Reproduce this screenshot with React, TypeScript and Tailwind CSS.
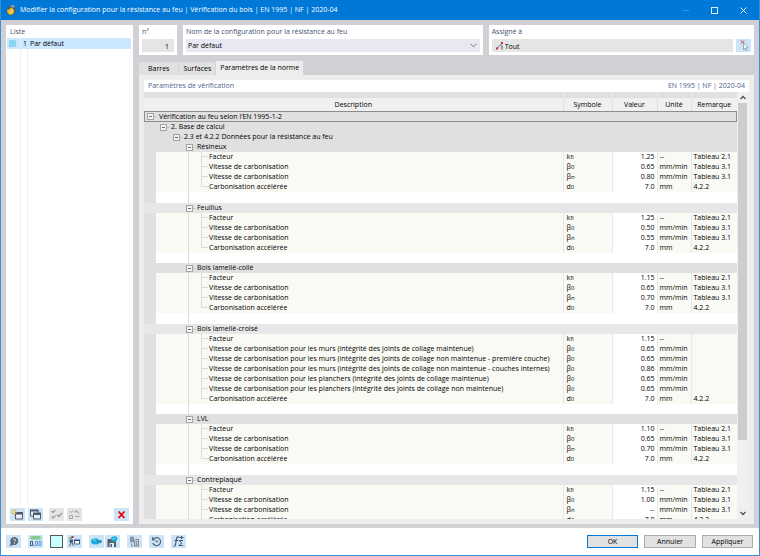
import { useState } from 'react'
import type { ReactNode } from 'react'
import { clsx } from 'clsx'

type Leaf = {
  label: string
  symbol: string
  sub: string
  value: string
  unit: string
  note: string
}

type Group = { title: string; leaves: Leaf[] }

const SPEED = 'Vitesse de carbonisation'
const MM = 'mm/min'

const leaf = (label: string, symbol: string, sub: string, value: string, unit: string, note: string): Leaf => ({
  label,
  symbol,
  sub,
  value,
  unit,
  note,
})

const standardLeaves = (factor: string, b0: string, bn: string): Leaf[] => [
  leaf('Facteur', 'k', 'fi', factor, '--', 'Tableau 2.1'),
  leaf(SPEED, 'β', '0', b0, MM, 'Tableau 3.1'),
  leaf(SPEED, 'β', 'n', bn, MM, 'Tableau 3.1'),
  leaf('Carbonisation accélérée', 'd', '0', '7.0', 'mm', '4.2.2'),
]

const GROUPS: Group[] = [
  { title: 'Résineux', leaves: standardLeaves('1.25', '0.65', '0.80') },
  { title: 'Feuillus', leaves: standardLeaves('1.25', '0.50', '0.55') },
  { title: 'Bois lamellé-collé', leaves: standardLeaves('1.15', '0.65', '0.70') },
  {
    title: 'Bois lamellé-croisé',
    leaves: [
      leaf('Facteur', 'k', 'fi', '1.15', '--', ''),
      leaf(`${SPEED} pour les murs (intégrité des joints de collage maintenue)`, 'β', '0', '0.65', MM, ''),
      leaf(`${SPEED} pour les murs (intégrité des joints de collage non maintenue - première couche)`, 'β', '0', '0.65', MM, ''),
      leaf(`${SPEED} pour les murs (intégrité des joints de collage non maintenue - couches internes)`, 'β', '0', '0.86', MM, ''),
      leaf(`${SPEED} pour les planchers (intégrité des joints de collage maintenue)`, 'β', '0', '0.65', MM, ''),
      leaf(`${SPEED} pour les planchers (intégrité des joints de collage non maintenue)`, 'β', '0', '0.65', MM, ''),
      leaf('Carbonisation accélérée', 'd', '0', '7.0', 'mm', '4.2.2'),
    ],
  },
  { title: 'LVL', leaves: standardLeaves('1.10', '0.65', '0.70') },
  { title: 'Contreplaqué', leaves: standardLeaves('1.15', '1.00', '--') },
]

const TABS = ['Barres', 'Surfaces', 'Paramètres de la norme']

function Toggle({ open, label, onClick }: { open: boolean; label: string; onClick?: () => void }) {
  return (
    <span className="flex w-[13px] shrink-0 items-center">
      <span className="w-[3px]" />
      <button
        type="button"
        aria-label={label}
        aria-expanded={open}
        onClick={onClick}
        className="flex size-[7px] items-center justify-center border border-[#a3a3a3] bg-[#f4f4f4]"
      >
        <svg viewBox="0 0 5 5" className="size-[5px]" shapeRendering="crispEdges">
          <path d="M1 2h3v1H1z" fill="#6c6c6c" />
          {!open && <path d="M2 1h1v3H2z" fill="#6c6c6c" />}
        </svg>
      </button>
      <span className="h-px w-[3px] bg-[#c8c8c8]" />
    </span>
  )
}

function Guide({ last, branch }: { last?: boolean; branch?: boolean }) {
  return (
    <span className="flex h-[10px] w-[13px] shrink-0">
      <span className={clsx('w-[6px] border-r border-[#dcdcdc]', last ? 'h-[5px]' : 'h-full')} />
      {branch && <span className="h-[5px] w-[6px] border-b border-[#dcdcdc]" />}
    </span>
  )
}

function IconButton({ label, muted, children }: { label: string; muted?: boolean; children: ReactNode }) {
  return (
    <button
      type="button"
      aria-label={label}
      className={clsx('flex h-[13px] w-[15px] shrink-0 items-center justify-center', muted ? 'bg-[#e5e5e5]' : 'bg-[#cce4f7]')}
    >
      <svg viewBox="0 0 15 13" className="h-[13px] w-[15px]" fill="none">
        {children}
      </svg>
    </button>
  )
}

function TitleBar() {
  return (
    <header className="flex h-5 shrink-0 items-center bg-[#0078d7] pr-px pl-[5px] text-white">
      <svg viewBox="0 0 10 10" className="size-[10px]">
        <path d="M1 3l2 1 .500-3 2-1 3 1.500 1 3.500-1 4-4 1-3-1-1-3z" fill="#55585e" />
        <path d="M1 4.500l2.500 0 1-2 2.500 1 1.200 2.500-1.200 3.200-3.500.6-2-2z" fill="#f5b81f" />
        <path d="M4.500 1l3.500 1.200M6 .5l2.500 1" stroke="#d8d8d8" strokeWidth=".7" />
        <circle cx="5" cy="6.500" r="1.200" fill="#fff2a0" />
        <circle cx="5" cy="6.500" r=".5" fill="#55585e" />
      </svg>
      <h1 className="ml-1 flex-1 text-[7px] leading-[20px] whitespace-nowrap">
        Modifier la configuration pour la résistance au feu | Vérification du bois | EN 1995 | NF | 2020-04
      </h1>
      <button type="button" aria-label="Réduire" className="flex w-[29px] justify-center">
        <span className="h-px w-[6px] bg-[#3d97e0]" />
      </button>
      <button type="button" aria-label="Agrandir" className="flex w-[29px] justify-center">
        <span className="size-[7px] border border-[#d9ebfa]" />
      </button>
      <button type="button" aria-label="Fermer" className="flex w-[29px] justify-center">
        <svg viewBox="0 0 7 7" className="size-[7px]" stroke="#e9f3fc">
          <path d="M.5.5l6 6M6.500.5l-6 6" />
        </svg>
      </button>
    </header>
  )
}

function ConfigList() {
  return (
    <aside className="flex w-[127px] shrink-0 flex-col bg-white px-px text-[7px]">
      <h2 className="h-[13px] pl-[3px] leading-[13px] text-[#44546f]">Liste</h2>
      <button type="button" className="flex h-[11px] w-[124px] items-center bg-[#cce8ff] text-left">
        <span className="ml-[2px] size-[7px] bg-[#8bd7f3]" />
        <span className="ml-[4px] h-full w-px bg-[#e2f1fc]" />
        <span className="ml-[2px] w-[7px] leading-[11px]">1</span>
        <span className="leading-[11px]">Par défaut</span>
      </button>
      <div className="flex flex-1">
        <span className="ml-[13px] w-px bg-[#f0f0f0]" />
        <span className="ml-[6px] w-px bg-[#f0f0f0]" />
      </div>
      <div className="mt-[3px] mb-[3px] flex px-[3px]">
        <IconButton label="Nouveau">
          <path d="M5.500 5.500h7v5.500h-7z" fill="#e9eef5" stroke="#4f5a6b" />
          <path d="M5 4h8v2.500H5z" fill="#4f5a6b" />
          <path d="M4 1v6M1 4h6M2 2l4 4M6 2L2 6" stroke="#d2b43a" strokeWidth=".9" />
          <circle cx="4" cy="4" r="1" fill="#fff3a0" />
        </IconButton>
        <span className="w-[3px]" />
        <IconButton label="Copier">
          <path d="M2.500 2.500h7.500v5.500h-7.500z" fill="#e9eef5" stroke="#4f5a6b" />
          <path d="M2 1.500h8.500v2H2z" fill="#4f5a6b" />
          <path d="M5.500 5.500h7v5.500h-7z" fill="#e9eef5" stroke="#4f5a6b" />
          <path d="M5 4.500h8v2.500H5z" fill="#4f5a6b" />
        </IconButton>
        <span className="w-[6px]" />
        <IconButton label="Tout sélectionner" muted>
          <path d="M2.500 3l1.500 1.500L6.500 2M2.500 8.500L4 10l2.500-2.500M8 6.500l1.800 2L13 5" stroke="#9a9a9a" strokeWidth="1.200" />
        </IconButton>
        <span className="w-[3px]" />
        <IconButton label="Inverser la sélection" muted>
          <path d="M2.500 3l1.500 1.500L6.500 2M2.500 7.500h3v3h-3zM8 3.500q4-.500 4 2M8 3.500l1.500-1.500M8 3.500L9.500 5M12.500 8.500H8" stroke="#a8a8a8" />
        </IconButton>
        <span className="flex-1" />
        <IconButton label="Supprimer">
          <path d="M4.500 3.500l6 6.500M10.500 3.500l-6 6.500" stroke="#f00000" strokeWidth="1.800" />
        </IconButton>
      </div>
    </aside>
  )
}

function ConfigHeader() {
  return (
    <div className="flex gap-[6px] text-[7px]">
      <div className="w-[38px] shrink-0 bg-white px-[3px] pb-[3px]">
        <label htmlFor="num" className="block h-[14px] leading-[13px] text-[#44546f]">
          n°
        </label>
        <input id="num" readOnly defaultValue="1" className="block h-[13px] w-full bg-[#e5e5e5] pt-px pr-[5px] text-right outline-none" />
      </div>
      <div className="min-w-0 flex-[300] bg-white px-[3px] pb-[3px]">
        <label htmlFor="name" className="block h-[14px] leading-[13px] text-[#44546f]">
          Nom de la configuration pour la résistance au feu
        </label>
        <div className="flex h-[13px] items-center bg-[#e8e8f3] pr-[3px]">
          <select id="name" className="h-full min-w-0 flex-1 appearance-none bg-transparent pt-px pl-[2px] outline-none">
            <option>Par défaut</option>
          </select>
          <svg viewBox="0 0 7 5" className="h-[5px] w-[7px]" fill="none" stroke="#777">
            <path d="M.5.8l3 3 3-3" />
          </svg>
        </div>
      </div>
      <div className="min-w-0 flex-[265] bg-white px-[3px] pb-[3px]">
        <label htmlFor="assigned" className="block h-[14px] leading-[13px] text-[#44546f]">
          Assigné à
        </label>
        <div className="flex gap-[3px]">
          <div className="flex h-[13px] min-w-0 flex-1 items-center bg-[#e5e5e5] pl-[4px]">
            <svg viewBox="0 0 8 8" className="size-[8px]" fill="none">
              <path d="M1 6.500L6 1.500" stroke="#8fa9c4" strokeWidth="1.400" />
              <path d="M6 3.500v4" stroke="#555" />
              <path d="M0 5.500h2v2H0zM5 0h2v2H5z" fill="#d22a2a" />
            </svg>
            <input id="assigned" readOnly defaultValue="Tout" className="h-full min-w-0 flex-1 bg-transparent pt-px pl-px outline-none" />
          </div>
          <IconButton label="Sélectionner">
            <path d="M5 1.500l3 3M8 1.500l-3 3" stroke="#c9404c" />
            <path d="M7.500 4v6.500l1.500-1.300 1 2.300 1-.5-1-2.200 2-.2z" fill="#fff" stroke="#888" strokeWidth=".7" />
          </IconButton>
        </div>
      </div>
    </div>
  )
}

function LeafRow({ item, last, lastGroup }: { item: Leaf; last: boolean; lastGroup: boolean }) {
  const edge = 'border-l border-[#e8e8e8] p-0'
  return (
    <tr className="h-[10px] bg-[#fafaf5]">
      <td className="p-0">
        <div className="flex h-[10px] items-center whitespace-nowrap">
          <span className="h-full w-3 shrink-0 bg-[#e0e0e0]" />
          <span className="w-[27px] shrink-0" />
          <Guide last={lastGroup && last} />
          <Guide last={last} branch />
          <span>{item.label}</span>
        </div>
      </td>
      <td className={clsx(edge, 'pl-[3px]')}>
        {item.symbol}
        <span className="text-[6px]">{item.sub}</span>
      </td>
      <td className={clsx(edge, 'bg-white pr-[2px] text-right')}>{item.value}</td>
      <td className={clsx(edge, 'pl-[2px] whitespace-nowrap')}>{item.unit}</td>
      <td className={clsx(edge, 'pl-[2px] whitespace-nowrap')}>{item.note}</td>
    </tr>
  )
}

function ParameterTable() {
  const [closed, setClosed] = useState<string[]>([])

  function toggle(title: string) {
    setClosed((prev) => (prev.includes(title) ? prev.filter((t) => t !== title) : [...prev, title]))
  }

  return (
    <div className="flex min-h-0 flex-1">
      <div className="min-w-0 flex-1 overflow-hidden">
        <table className="w-full table-fixed border-collapse text-[7px] leading-[10px]">
          <colgroup>
            <col />
            <col className="w-[49px]" />
            <col className="w-[45px]" />
            <col className="w-[34px]" />
            <col className="w-[46px]" />
          </colgroup>
          <thead>
            <tr className="h-[6px] bg-[#e0e0e0]">
              <td className="p-0" />
              <td className="border-l border-[#f0f0f0] p-0" />
              <td className="border-l border-[#f0f0f0] p-0" />
              <td className="border-l border-[#f0f0f0] p-0" />
              <td className="border-l border-[#f0f0f0] p-0" />
            </tr>
            <tr className="h-[13px] bg-[#f0f0f0]">
              <th className="p-0 font-normal">Description</th>
              <th className="border-l border-[#dedede] p-0 font-normal">Symbole</th>
              <th className="border-l border-[#dedede] p-0 font-normal">Valeur</th>
              <th className="border-l border-[#dedede] p-0 font-normal">Unité</th>
              <th className="border-l border-[#dedede] p-0 font-normal">Remarque</th>
            </tr>
          </thead>
          <tbody>
            <tr className="bg-[#e0e0e0]">
              <td colSpan={5} className="p-0">
                <div className="flex h-[11px] items-center outline outline-offset-[-1px] outline-[#8c8c8c]">
                  <Toggle open label="Vérification au feu" />
                  <span className="pl-[2px]">Vérification au feu selon l’EN 1995-1-2</span>
                </div>
              </td>
            </tr>
            <tr className="bg-[#e0e0e0]">
              <td colSpan={5} className="p-0">
                <div className="flex h-[10px] items-center pl-[13px]">
                  <Toggle open label="Base de calcul" />
                  <span className="pl-px">2. Base de calcul</span>
                </div>
              </td>
            </tr>
            <tr className="bg-[#e0e0e0]">
              <td colSpan={5} className="p-0">
                <div className="flex h-[10px] items-center pl-[26px]">
                  <Toggle open label="Données" />
                  <span className="pl-px">2.3 et 4.2.2 Données pour la résistance au feu</span>
                </div>
              </td>
            </tr>
          </tbody>
          {GROUPS.map((group, i) => {
            const open = !closed.includes(group.title)
            const lastGroup = i === GROUPS.length - 1
            return (
              <tbody key={group.title}>
                <tr className={i % 2 ? 'bg-[#e7e7e7]' : 'bg-[#e0e0e0]'}>
                  <td colSpan={5} className="p-0">
                    <div className="flex h-[10px] items-center pl-[39px]">
                      <Toggle open={open} label={group.title} onClick={() => toggle(group.title)} />
                      <span className="pl-px">{group.title}</span>
                    </div>
                  </td>
                </tr>
                {open &&
                  group.leaves.map((item, n) => (
                    <LeafRow key={n} item={item} last={n === group.leaves.length - 1} lastGroup={lastGroup} />
                  ))}
                <tr className="bg-white">
                  <td colSpan={5} className="p-0">
                    <div className={clsx('flex', i % 2 ? 'h-[10px]' : 'h-[11px]')}>
                      <span className="w-3 bg-[#e0e0e0]" />
                      <span className="w-[32px]" />
                      {!lastGroup && <span className="w-px bg-[#dcdcdc]" />}
                    </div>
                  </td>
                </tr>
              </tbody>
            )
          })}
        </table>
      </div>
      <div className="flex w-[12px] shrink-0 flex-col items-center bg-[#f0f0f0] pr-px">
        <svg viewBox="0 0 6 11" className="h-[11px] w-[6px]" fill="none" stroke="#505050" strokeWidth="1.300">
          <path d="M.5 7L3 4.500 5.500 7" />
        </svg>
        <span className="w-[9px] flex-[337] bg-[#cdcdcd]" />
        <span className="flex-[68]" />
        <svg viewBox="0 0 6 11" className="h-[11px] w-[6px]" fill="none" stroke="#505050" strokeWidth="1.300">
          <path d="M.5 4L3 6.500 5.500 4" />
        </svg>
      </div>
    </div>
  )
}

function Footer() {
  return (
    <footer className="flex h-[27px] shrink-0 items-center bg-white pr-[6px] pl-[5px]">
      <IconButton label="Aide">
        <path d="M8.500 2a4 4 0 1 1-1.500 7.800L3.500 11.500 4.800 8A4 4 0 0 1 8.500 2z" fill="#5b6470" />
        <path d="M7 5q1.300-1.600 2.600-.3.600 1.100-1.200 1.800v.8M8.400 8v1" stroke="#dcebf7" strokeWidth=".9" />
      </IconButton>
      <span className="w-[7px]" />
      <IconButton label="Unités">
        <path d="M2.500 1h10v3.500h-10z" fill="#86cc8a" />
        <path d="M2.500 6.500h2v4h-2z" stroke="#4a5a70" />
        <path d="M5.500 10h1v1h-1z" fill="#4a5a70" />
        <path d="M7.500 6.500h2v4h-2zM11 6.500h2v4h-2z" stroke="#5f9de0" />
      </IconButton>
      <span className="w-[7px]" />
      <button type="button" aria-label="Couleur" className="size-[13px] border border-[#4d5a5e] bg-[#ccffff]" />
      <span className="w-[4px]" />
      <IconButton label="Affichage">
        <path d="M2.500 2h2v2h-2z" fill="#4caf50" />
        <path d="M4.500 1h2v2h-2z" fill="#d22a2a" />
        <path d="M2.500 4.500h3.500v3H2.500z" fill="#4a5a70" />
        <path d="M4.500 6.500L2.500 11M4.500 6.500L6.500 11" stroke="#4a5a70" />
        <path d="M7.500 5.500h5v3.500h-5z" fill="#fff" stroke="#4a5a70" />
        <path d="M7 4.500h6V6H7z" fill="#33499c" />
      </IconButton>
      <span className="w-[7px]" />
      <IconButton label="Importer">
        <path d="M2 6.500q0-3 3-2.700 2.500-1.500 4.500.7 2 .500 1.500 2.500-1 3-4 2.300Q2.500 10 2 6.500z" fill="#1cabd8" />
        <path d="M4 5.500q2-1 3 .500" stroke="#7adcf2" />
        <path d="M8.500 6.500h3.500M11 4.800l1.800 1.700L11 8.200" stroke="#2b6fa0" />
      </IconButton>
      <span className="w-px" />
      <IconButton label="Enregistrer">
        <path d="M2.500 4h8.500v8H2.500z" fill="#56616f" />
        <path d="M4.500 8h4.500v4H4.500z" fill="#dfeaf5" />
        <path d="M5.500 9h1.500v3H5.500z" fill="#56616f" />
        <path d="M6 3.500Q6.500 1 9 1.500q3-.700 3.500 2-.5 3.500-4 3Q6 6.500 6 3.500z" fill="#1cabd8" />
        <path d="M7.500 4q1.500-1.500 3 0" stroke="#7adcf2" />
      </IconButton>
      <span className="w-[7px]" />
      <IconButton label="Copier les paramètres">
        <path d="M3 1.500h4v6H3z" fill="#9aa5b1" />
        <path d="M3 3.500h4M3 5.500h4" stroke="#6d7784" strokeWidth=".7" />
        <path d="M7.500 5.500l1-1h3v6.500h-4z" fill="#c9d0d8" stroke="#7a8490" />
        <path d="M9.500 6v4.500M4.500 8.500V11h2" stroke="#7a8490" strokeWidth=".8" />
      </IconButton>
      <span className="w-[7px]" />
      <IconButton label="Réinitialiser">
        <path d="M4.200 4.500a4 4 0 1 1-.4 3.500M3.500 2v3h3" stroke="#5b6470" strokeWidth="1.200" />
        <circle cx="7.800" cy="6.500" r="1" fill="#5b6470" />
      </IconButton>
      <span className="w-[7px]" />
      <IconButton label="Formules">
        <path d="M8 2.200Q6 1 5.500 4L4.500 9.500q-.5 2-2 1.500M3.500 5.500h4" stroke="#4a5566" strokeWidth="1.100" />
        <path d="M12 5.500H8.500L10.500 8l-2.500 2.500h4" stroke="#4a5566" />
        <path d="M8.500 2.500h4M10.500 1v3" stroke="#3c4f86" />
      </IconButton>
      <span className="flex-1" />
      <div className="flex gap-[6px] text-[7px] leading-[11px]">
        <button type="button" className="h-[13px] w-[51px] bg-[#e1e1e1] outline outline-offset-[-1px] outline-[#0078d7]">
          OK
        </button>
        <button type="button" className="h-[13px] w-[52px] border border-[#adadad] bg-[#e1e1e1]">
          Annuler
        </button>
        <button type="button" className="h-[13px] w-[51px] border border-[#adadad] bg-[#e1e1e1]">
          Appliquer
        </button>
      </div>
    </footer>
  )
}

export default function App() {
  const [tab, setTab] = useState(TABS[2])

  return (
    <div className="flex h-screen flex-col overflow-hidden border-x border-b border-[#3a8fd6] bg-[#d0d0d5] font-['Open_Sans','Noto_Sans',sans-serif] text-black">
      <TitleBar />
      <main className="flex min-h-0 flex-1 gap-[6px] p-[5px] pb-[4px]">
        <ConfigList />
        <div className="flex min-w-0 flex-1 flex-col">
          <ConfigHeader />
          <div role="tablist" className="mt-[6px] flex h-[14px] shrink-0 items-end text-[7px]">
            {TABS.map((name) => (
              <button
                key={name}
                type="button"
                role="tab"
                aria-selected={tab === name}
                onClick={() => setTab(name)}
                className={clsx(
                  'px-[4px] leading-[14px] first:px-[9px]',
                  tab === name ? 'h-[14px] bg-[#ededed]' : 'h-[13px] border-r border-[#d0d0d5] bg-[#e0e0e0]',
                )}
              >
                {name}
              </button>
            ))}
          </div>
          <section className="flex min-h-0 flex-1 flex-col bg-[#ededed] p-[5px]">
            <div className="flex h-[12px] shrink-0 items-center justify-between bg-white px-[4px] text-[7px] text-[#4f6190]">
              <h2>Paramètres de vérification</h2>
              <span>EN 1995 | NF | 2020-04</span>
            </div>
            <ParameterTable />
          </section>
        </div>
      </main>
      <Footer />
    </div>
  )
}
